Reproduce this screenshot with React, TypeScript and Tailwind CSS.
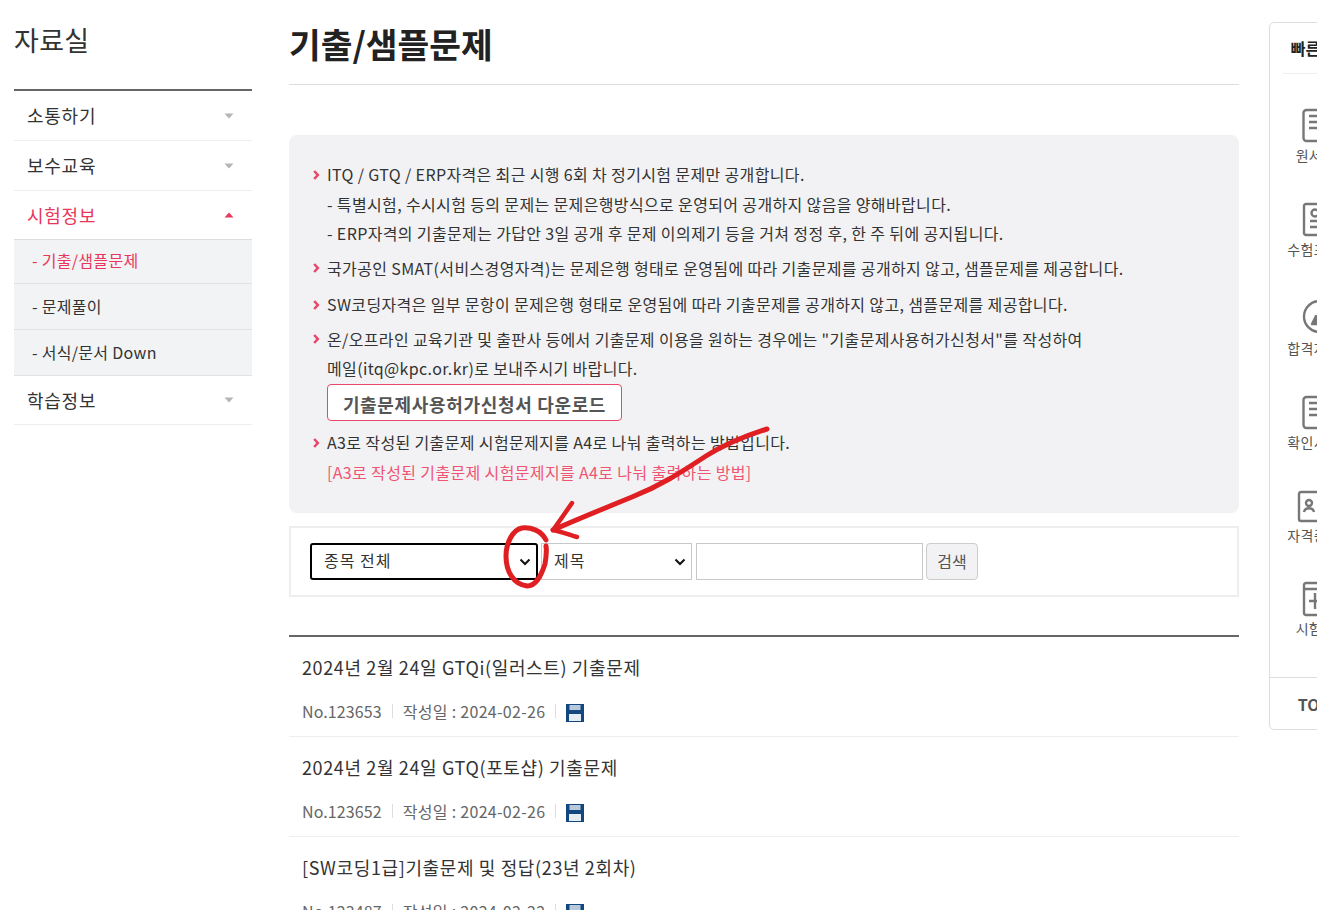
const FONT = 'font-["Noto_Sans_CJK_KR","Noto_Sans",sans-serif]';

const menu = [
  { label: '소통하기', h: 'h-[50px]' },
  { label: '보수교육', h: 'h-[50px]' },
];

const subMenu = [
  { label: '- 기출/샘플문제', active: true, h: 'h-[44px] pb-[4px]' },
  { label: '- 문제풀이', active: false, h: 'h-[46px] pb-[2px]' },
  { label: '- 서식/문서 Down', active: false, h: 'h-[46px] pb-[2px]' },
];

const posts = [
  { title: '2024년 2월 24일 GTQi(일러스트) 기출문제', no: 'No.123653', date: '2024-02-26' },
  { title: '2024년 2월 24일 GTQ(포토샵) 기출문제', no: 'No.123652', date: '2024-02-26' },
  { title: '[SW코딩1급]기출문제 및 정답(23년 2회차)', no: 'No.123487', date: '2024-02-22' },
];

function Caret({ up = false }: { up?: boolean }) {
  return (
    <svg width="10" height="6" viewBox="0 0 10 6" className={up ? 'fill-[#e8375a]' : 'fill-[#b5b5b5]'}>
      <path d={up ? 'M5 0.5L9.5 5.5H0.5Z' : 'M0.5 0.5H9.5L5 5.5Z'} />
    </svg>
  );
}

function Bullet() {
  return (
    <span className="w-[14px] h-[29.5px] flex-shrink-0 flex items-center">
      <svg width="7" height="10" viewBox="0 0 7 10" fill="none" stroke="#e8486a" strokeWidth="2.6">
        <path d="M1.2 1l3.6 4-3.6 4" />
      </svg>
    </span>
  );
}

function Chevron({ right }: { right: string }) {
  return (
    <svg width="12" height="8" viewBox="0 0 12 8" fill="none" stroke="#111" strokeWidth="2" className={`absolute top-[15px] pointer-events-none ${right}`}>
      <path d="M1.5 1.5L6 6l4.5-4.5" />
    </svg>
  );
}

function FloppyIcon() {
  return (
    <svg width="18" height="18" viewBox="0 0 18 18" className="flex-shrink-0 mt-[4px]">
      <rect width="18" height="18" fill="#12477f" />
      <rect x="3.5" y="1" width="11" height="5" fill="#b9c9dc" />
      <rect x="3" y="10" width="12" height="7" fill="#e6ecf3" />
    </svg>
  );
}

function QuickIcon({ kind }: { kind: number }) {
  const lines = <path d="M7 8h14M7 14h14M7 20h14" />;
  return (
    <svg width="40" height="36" viewBox="0 0 40 36" fill="none" stroke="#777" strokeWidth="2.4" strokeLinejoin="round" className="overflow-visible">
      {(kind === 0 || kind === 3) && (
        <>
          <rect x="1.5" y="2" width="34" height="31" rx="3" />
          {lines}
        </>
      )}
      {kind === 1 && (
        <>
          <rect x="2" y="2" width="34" height="31" rx="2" />
          <circle cx="13" cy="11" r="3.5" />
          <path d="M8 19h14M8 25h14" />
        </>
      )}
      {kind === 2 && (
        <>
          <circle cx="17.5" cy="17.5" r="15.5" />
          <path d="M10 25l4-8 6 8z" fill="#777" />
        </>
      )}
      {kind === 4 && (
        <>
          <rect x="-3" y="3" width="48" height="29" rx="2" />
          <circle cx="7" cy="14" r="3" />
          <path d="M2 23c1-5 9-5 10 0" />
        </>
      )}
      {kind === 5 && (
        <>
          <rect x="2" y="2" width="34" height="32" rx="2" />
          <path d="M2 8h34M13 12v16M7 20h16" />
        </>
      )}
    </svg>
  );
}

const quickLinks = [
  { label: '원서접수', h: 'h-[94px]', gap: 'mt-[1px]' },
  { label: '수험표 출력', h: 'h-[97px]', gap: 'mt-[1px]' },
  { label: '합격자 발표', h: 'h-[96px]', gap: 'mt-[3px]' },
  { label: '확인서 발급', h: 'h-[94px]', gap: 'mt-[1px]' },
  { label: '자격증 발급', h: 'h-[92px]', gap: 'mt-0' },
  { label: '시험일정', h: 'h-[66px]', gap: 'mt-[1px]' },
];

export default function App() {
  return (
    <div className={`relative w-[1317px] h-[910px] overflow-hidden bg-white flex text-[#333] ${FONT}`}>
      {/* ── Left menu ─────────────────────────────────── */}
      <aside className="w-[238px] ml-[14px] flex-shrink-0">
        <h2 className="h-[89px] pt-[20px] text-[27px] leading-[40px] tracking-[0.3px] text-[#333]">자료실</h2>
        <nav className="border-t-2 border-[#666]">
          {menu.map((m) => (
            <div key={m.label} className={`${m.h} flex items-center justify-between pl-[13px] pr-[18px] border-b border-[#eee] text-[18px] tracking-[0.75px]`}>
              {m.label}
              <Caret />
            </div>
          ))}
          <div className="h-[49px] flex items-center justify-between pl-[13px] pr-[18px] border-b border-[#ddd] text-[18px] tracking-[0.75px] text-[#e8375a]">
            시험정보
            <Caret up />
          </div>
          <div className="bg-[#f2f3f5]">
            {subMenu.map((s) => (
              <div
                key={s.label}
                className={`${s.h} flex items-center pl-[18px] border-b border-[#e2e2e2] text-[16px] tracking-[0.3px] ${s.active ? 'text-[#e8375a]' : ''}`}
              >
                {s.label}
              </div>
            ))}
          </div>
          <div className="h-[49px] flex items-center justify-between pl-[13px] pr-[18px] border-b border-[#eee] text-[18px] tracking-[0.75px]">
            학습정보
            <Caret />
          </div>
        </nav>
      </aside>

      {/* ── Main column ───────────────────────────────── */}
      <main className="w-[950px] ml-[37px] flex-shrink-0">
        <h1 className="h-[85px] pt-[17px] border-b border-[#ddd] text-[34.5px] leading-[52px] font-bold text-[#222]">기출/샘플문제</h1>

        {/* Notice */}
        <div className="mt-[50px] h-[378px] pt-[25px] px-[24px] bg-[#f2f2f4] rounded-lg text-[16px] leading-[29.5px] tracking-[0.36px] text-[#333]">
          <div className="flex mb-[5px]">
            <Bullet />
            <div>
              ITQ / GTQ / ERP자격은 최근 시행 6회 차 정기시험 문제만 공개합니다.
              <br />- 특별시험, 수시시험 등의 문제는 문제은행방식으로 운영되어 공개하지 않음을 양해바랍니다.
              <br />- ERP자격의 기출문제는 가답안 3일 공개 후 문제 이의제기 등을 거쳐 정정 후, 한 주 뒤에 공지됩니다.
            </div>
          </div>
          <div className="flex mb-[7px]">
            <Bullet />
            <div>국가공인 SMAT(서비스경영자격)는 문제은행 형태로 운영됨에 따라 기출문제를 공개하지 않고, 샘플문제를 제공합니다.</div>
          </div>
          <div className="flex mb-[5px]">
            <Bullet />
            <div>SW코딩자격은 일부 문항이 문제은행 형태로 운영됨에 따라 기출문제를 공개하지 않고, 샘플문제를 제공합니다.</div>
          </div>
          <div className="flex">
            <Bullet />
            <div>
              온/오프라인 교육기관 및 출판사 등에서 기출문제 이용을 원하는 경우에는 "기출문제사용허가신청서"를 작성하여
              <br />메일(itq@kpc.or.kr)로 보내주시기 바랍니다.
              <button className="block mt-[0.5px] w-[295px] h-[37px] pt-[3px] bg-white border border-[#e8486a] rounded text-[18px] tracking-[0.67px] leading-[30px] font-bold text-[#555]">
                기출문제사용허가신청서 다운로드
              </button>
            </div>
          </div>
          <div className="flex mt-[7px]">
            <Bullet />
            <div>
              A3로 작성된 기출문제 시험문제지를 A4로 나눠 출력하는 방법입니다.
              <br />
              <span className="text-[#ef5573]">[A3로 작성된 기출문제 시험문제지를 A4로 나눠 출력하는 방법]</span>
            </div>
          </div>
        </div>

        {/* Search */}
        <div className="mt-[13px] h-[71px] border-2 border-[#eee] pl-[19px] pt-[15px] flex items-start text-[16px]">
          <div className="relative">
            <select defaultValue="all" className="block appearance-none w-[228px] h-[37px] pl-[12px] pb-[3px] bg-white border-2 border-black rounded-[3px] tracking-[1px] text-[#333]">
              <option value="all">종목 전체</option>
            </select>
            <Chevron right="right-[7px]" />
          </div>
          <div className="relative ml-[3px]">
            <select defaultValue="title" className="block appearance-none w-[151px] h-[37px] pl-[12px] pb-[3px] bg-white border border-[#c8c8c8] tracking-[1px] text-[#333]">
              <option value="title">제목</option>
            </select>
            <Chevron right="right-[6px]" />
          </div>
          <input type="text" className="ml-[4px] w-[227px] h-[37px] bg-white border border-[#c8c8c8]" />
          <button className="ml-[3px] w-[52px] h-[37px] pb-[1px] bg-[#f2f2f4] border border-[#ccc] rounded text-[#555]">검색</button>
        </div>

        {/* Post list */}
        <div className="mt-[38px] border-t-2 border-[#666]">
          {posts.map((p) => (
            <div key={p.no} className="h-[100px] px-[13px] border-b border-[#eee]">
              <div className="h-[62px] pt-[15px] text-[18px] leading-[30px] tracking-[0.63px] text-[#333]">{p.title}</div>
              <div className="flex items-center text-[16px] leading-[24px] text-[#666]">
                <span className="tracking-[0.1px]">{p.no}</span>
                <span className="mx-[10px] h-[14px] border-l border-[#ddd]" />
                <span className="tracking-[0.3px]">작성일 : {p.date}</span>
                <span className="mx-[10px] h-[14px] border-l border-[#ddd]" />
                <FloppyIcon />
              </div>
            </div>
          ))}
        </div>
      </main>

      {/* ── Quick menu ────────────────────────────────── */}
      <aside className="w-[106px] ml-[30px] mt-[22px] h-[708px] flex-shrink-0 border border-[#ddd] rounded-[5px] bg-white">
        <div className="mx-[13px] h-[51px] border-b border-[#eee] flex items-center justify-center text-[16px] font-bold text-[#222]">빠른 메뉴</div>
        <div className="h-[604px] pt-[34px] border-b border-[#ddd]">
          {quickLinks.map((q, i) => (
            <div key={q.label} className={`${q.h} flex flex-col items-center text-[14px] leading-[20px] tracking-[0.3px] text-[#555]`}>
              <QuickIcon kind={i} />
              <span className={`whitespace-nowrap ${q.gap}`}>{q.label}</span>
            </div>
          ))}
        </div>
        <div className="h-[51px] flex items-center justify-center gap-[4px] text-[16px] font-bold text-[#555]">
          TOP
          <svg width="12" height="8" viewBox="0 0 12 8" fill="none" stroke="#555" strokeWidth="2">
            <path d="M1.5 6.5L6 2l4.5 4.5" />
          </svg>
        </div>
      </aside>

      {/* Hand-drawn red annotation */}
      <svg width="1317" height="910" viewBox="0 0 1317 910" fill="none" stroke="#df1f22" strokeLinecap="round" strokeLinejoin="round" className="absolute inset-0 pointer-events-none">
        <path strokeWidth="5" d="M767 429C745 436 725 444 706 456C680 473 660 486 632 497C605 508 578 519 553 530" />
        <path strokeWidth="4.5" d="M572 503C565 513 559 522 553 530C562 532 570 535 577 537" />
        <path strokeWidth="5" d="M546 540C541 530 530 527 522 528C512 530 506 544 506 556C506 571 513 584 527 586C536 586 541 576 545 564C546 558 547 552 546 546" />
      </svg>
    </div>
  );
}
